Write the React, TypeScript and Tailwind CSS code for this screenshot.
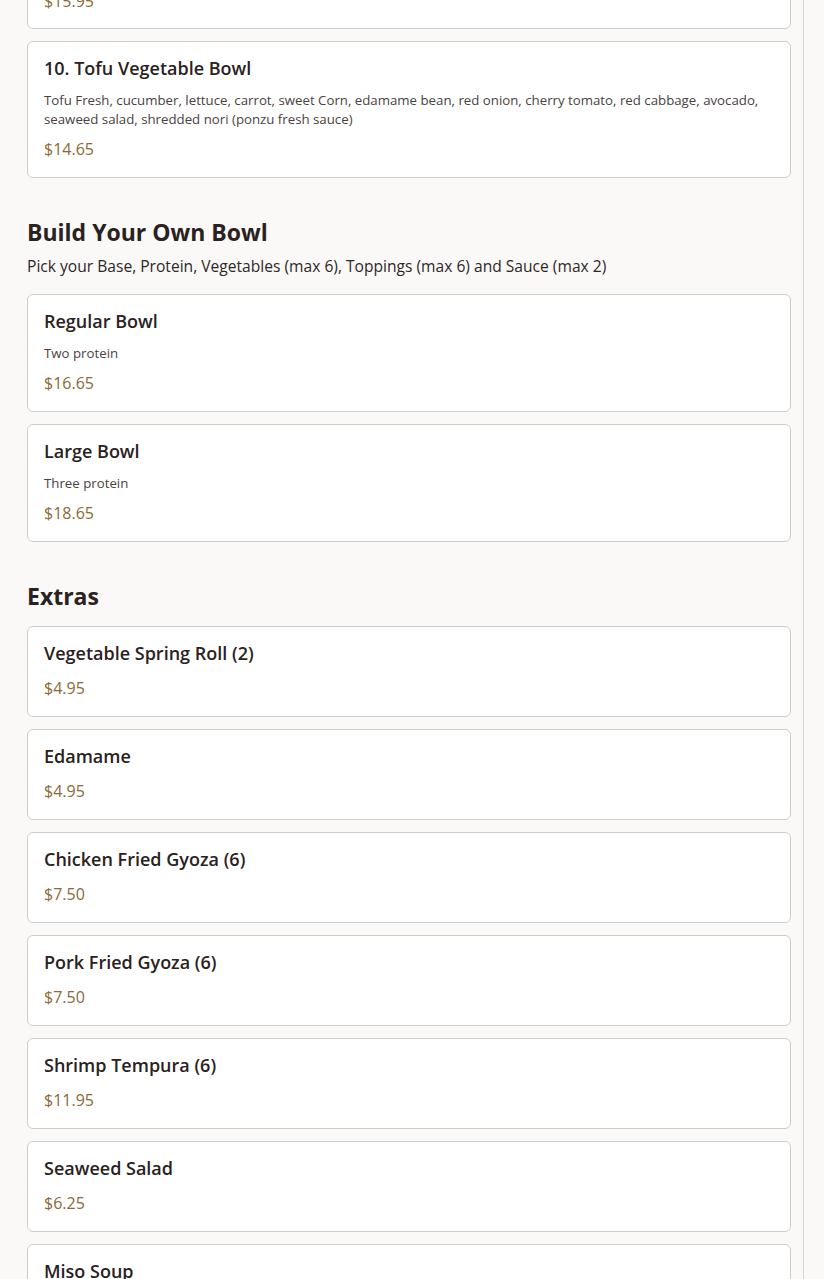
import React from "react";

type Item = { name: string; desc?: string; price: string };

const BUILD: Item[] = [
  { name: "Regular Bowl", desc: "Two protein", price: "$16.65" },
  { name: "Large Bowl", desc: "Three protein", price: "$18.65" },
];

const EXTRAS: Item[] = [
  { name: "Vegetable Spring Roll (2)", price: "$4.95" },
  { name: "Edamame", price: "$4.95" },
  { name: "Chicken Fried Gyoza (6)", price: "$7.50" },
  { name: "Pork Fried Gyoza (6)", price: "$7.50" },
  { name: "Shrimp Tempura (6)", price: "$11.95" },
  { name: "Seaweed Salad", price: "$6.25" },
  { name: "Miso Soup", price: "$3.95" },
];

function Card({ item }: { item: Item }) {
  return (
    <div className="rounded-md border border-[#cfcdca] bg-white px-4 pt-[14px] pb-[17px]">
      <h3 className="text-[18px] leading-6 font-semibold text-[#2a2121]">{item.name}</h3>
      {item.desc && (
        <p className="mt-[11px] text-[13.25px] leading-[19px] text-[#4a4242]">{item.desc}</p>
      )}
      <div
        className={
          item.desc
            ? "mt-[9px] text-[16px] leading-[22px] text-[#8a6a36]"
            : "mt-[12px] text-[16px] leading-[22px] text-[#8a6a36]"
        }
      >
        {item.price}
      </div>
    </div>
  );
}

export default function App() {
  return (
    <div className="min-h-screen overflow-hidden bg-[#faf9f7] font-['Open_Sans',sans-serif]">
      <div className="w-[804px] border-r border-[#d6d4d1] pl-[27px] pr-[12px] pb-10">
        {/* tail of the previous card, scrolled mostly out of view */}
        <div className="-mt-[19px] rounded-md border border-[#cfcdca] bg-white px-4 pt-[8px] pb-4">
          <div className="text-[16px] leading-[22px] text-[#8a6a36]">$15.95</div>
        </div>

        <div className="mt-3">
          <Card
            item={{
              name: "10. Tofu Vegetable Bowl",
              desc: "Tofu Fresh, cucumber, lettuce, carrot, sweet Corn, edamame bean, red onion, cherry tomato, red cabbage, avocado, seaweed salad, shredded nori (ponzu fresh sauce)",
              price: "$14.65",
            }}
          />
        </div>

        <section className="mt-[38px]">
          <h2 className="text-[23px] leading-8 font-bold text-[#2a2121]">Build Your Own Bowl</h2>
          <p className="mt-[6px] text-[15.6px] leading-6 text-[#2f2727]">
            Pick your Base, Protein, Vegetables (max 6), Toppings (max 6) and Sauce (max 2)
          </p>
          <div className="mt-4 flex flex-col gap-3">
            {BUILD.map((it) => (
              <Card key={it.name} item={it} />
            ))}
          </div>
        </section>

        <section className="mt-[38px]">
          <h2 className="text-[23px] leading-8 font-bold text-[#2a2121]">Extras</h2>
          <div className="mt-[14px] flex flex-col gap-3">
            {EXTRAS.map((it) => (
              <Card key={it.name} item={it} />
            ))}
          </div>
        </section>
      </div>
    </div>
  );
}
